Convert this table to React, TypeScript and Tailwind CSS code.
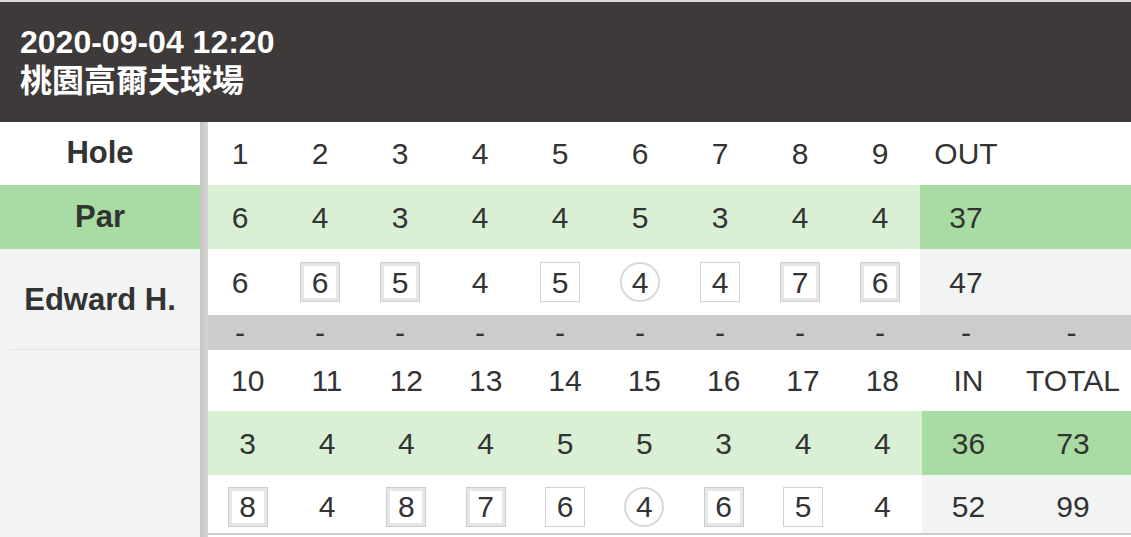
const front = {
  holes: ["1", "2", "3", "4", "5", "6", "7", "8", "9"],
  par: [6, 4, 3, 4, 4, 5, 3, 4, 4],
  score: [6, 6, 5, 4, 5, 4, 4, 7, 6],
};

const back = {
  holes: ["10", "11", "12", "13", "14", "15", "16", "17", "18"],
  par: [3, 4, 4, 4, 5, 5, 3, 4, 4],
  score: [8, 4, 8, 7, 6, 4, 6, 5, 4],
};

function Score({ v, par }: { v: number; par: number }) {
  const d = v - par;
  if (d < 0)
    return (
      <span className="flex h-10 w-10 items-center justify-center rounded-full border-2 border-[#d9d9d9]">
        {v}
      </span>
    );
  if (d === 1)
    return (
      <span className="flex h-10 w-10 items-center justify-center border border-[#d2d2d2]">
        {v}
      </span>
    );
  if (d >= 2)
    return (
      <span className="flex h-10 w-10 border border-[#cdcdcd]">
        <span className="flex h-full w-full items-center justify-center border-[3px] border-[#e6e6e6]">
          {v}
        </span>
      </span>
    );
  return <span>{v}</span>;
}

const frontCols = "grid grid-cols-[72px_repeat(8,80px)_92px_1fr]";
const backCols = "grid grid-cols-[repeat(9,minmax(0,1fr))_93px_116px]";
const cell = "flex items-center justify-center";

export default function App() {
  return (
    <main className="w-[1131px] h-[537px] overflow-hidden bg-white border-t-2 border-[#d9d9d9] text-[#333333] font-['Liberation_Sans','Noto_Sans_CJK_TC',Arial,sans-serif]">
      <header className="h-[120px] bg-[#3e3a39] px-5 pt-[22px] text-white font-bold text-[32px] leading-[36px]">
        <div>2020-09-04 12:20</div>
        <div className="mt-[3px]">桃園高爾夫球場</div>
      </header>

      <div className="flex h-[415px]">
        {/* name column */}
        <div className="w-[200px] flex flex-col bg-[#f2f3f3] font-bold text-[31px]">
          <div className="h-[63px] bg-white flex items-center justify-center">Hole</div>
          <div className="h-[64px] bg-[#a9dca3] flex items-center justify-center">Par</div>
          <div className="h-[101px] ml-[10px] pr-[10px] pt-[2px] border-b border-[#e3e4e4] flex items-center justify-center">
            Edward H.
          </div>
        </div>
        <div className="w-2 bg-gradient-to-r from-[#c4c4c4] to-[#d6d6d6]" />

        {/* scores */}
        <div className="flex-1 flex flex-col text-[30px]">
          <div className={`${frontCols} h-[63px]`}>
            {front.holes.map((h, i) => (
              <div key={h} className={`${cell} ${i === 0 ? "pr-2" : ""}`}>{h}</div>
            ))}
            <div className={cell}>OUT</div>
            <div />
          </div>
          <div className={`${frontCols} h-[64px] bg-[#d9f0d5]`}>
            {front.par.map((p, i) => (
              <div key={i} className={`${cell} ${i === 0 ? "pr-2" : ""}`}>{p}</div>
            ))}
            <div className={`${cell} bg-[#a9dca3]`}>37</div>
            <div className="bg-[#a9dca3]" />
          </div>
          <div className={`${frontCols} h-[66px]`}>
            {front.score.map((s, i) => (
              <div key={i} className={`${cell} ${i === 0 ? "pr-2" : ""}`}>
                <Score v={s} par={front.par[i]} />
              </div>
            ))}
            <div className={`${cell} bg-[#f2f3f3]`}>47</div>
            <div className="bg-[#f2f3f3]" />
          </div>
          <div className={`${frontCols} h-[35px] bg-[#cccccc] leading-[35px]`}>
            {Array.from({ length: 11 }).map((_, i) => (
              <div key={i} className={`${cell} ${i === 0 ? "pr-2" : ""}`}>-</div>
            ))}
          </div>

          <div className={`${backCols} h-[61px]`}>
            {back.holes.map((h) => (
              <div key={h} className={cell}>{h}</div>
            ))}
            <div className={cell}>IN</div>
            <div className={cell}>TOTAL</div>
          </div>
          <div className={`${backCols} h-[64px] bg-[#d9f0d5]`}>
            {back.par.map((p, i) => (
              <div key={i} className={cell}>{p}</div>
            ))}
            <div className={`${cell} bg-[#a9dca3]`}>36</div>
            <div className={`${cell} bg-[#a9dca3]`}>73</div>
          </div>
          <div className={`${backCols} h-[60px] border-b-2 border-[#cccccc]`}>
            {back.score.map((s, i) => (
              <div key={i} className={`${cell} pt-[5px]`}>
                <Score v={s} par={back.par[i]} />
              </div>
            ))}
            <div className={`${cell} pt-[5px] bg-[#f2f3f3]`}>52</div>
            <div className={`${cell} pt-[5px] bg-[#f2f3f3]`}>99</div>
          </div>
        </div>
      </div>
    </main>
  );
}
